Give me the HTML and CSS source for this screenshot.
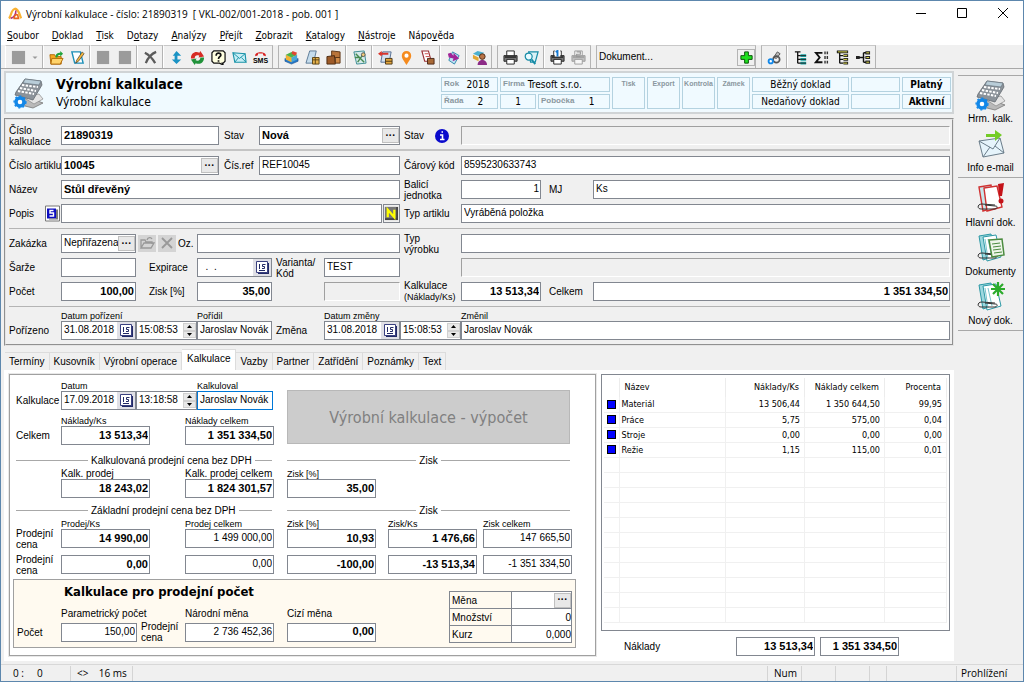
FILE: index.html
```html
<!DOCTYPE html>
<html lang="cs">
<head>
    <meta charset="UTF-8">
    <meta name="viewport" content="width=device-width, initial-scale=1.0">
    <title>Výrobní kalkulace</title>
    <link rel="stylesheet" href="styles.css">
</head>
<body>
    <!-- Shared icons -->
    <svg class="defs" width="0" height="0" aria-hidden="true">
        <symbol id="calc" viewBox="0 0 32 32">
            <path d="M8 21l14 2 8 3-10 5-8-2z" fill="#b9b9b9" stroke="#777" stroke-width=".8"/>
            <path d="M10 20l16-3 4 5-9 5z" fill="#e4e4e4" stroke="#888" stroke-width=".7"/>
            <path d="M12 2l16 2 1 4-9 15-18-5 1-3z" fill="#8b9299" stroke="#666c72" stroke-width=".8"/>
            <path d="M12 2l16 2-2 4-16-2z" fill="#b9cdd8" stroke="#5f6c76" stroke-width=".6"/>
            <path d="M9 8l16 2M7 11l16 3M5 14l16 3" stroke="#fff" stroke-width="2" stroke-dasharray="2.4 1.3"/>
            <circle cx="7" cy="25" r="4" fill="#fff" stroke="#1287e8" stroke-width="3.4"/>
            <circle cx="7" cy="25" r="5.9" fill="none" stroke="#1287e8" stroke-width="1.4" stroke-dasharray="2 2.4"/>
        </symbol>
        <symbol id="clip" viewBox="0 0 32 32">
            <path d="M4 4l12-2 4 22-12 4z" fill="#9fd8df" stroke="#2b98a5"/>
            <path d="M8 5l13-2 5 22-14 4z" fill="#fff" stroke="#2b98a5"/>
            <path d="M13 7l4 18M10 7l3 20" stroke="#58b5c0" stroke-width=".8" fill="none"/>
            <path d="M20 22l-13-1c-5 0-5 5-1 5l14 0c3-1 3-3 0-3l-10-1" fill="none" stroke="#333" stroke-width="1"/>
        </symbol>
        <symbol id="cal" viewBox="0 0 13 13">
            <path d="M2 2h11v11H2z" fill="#222a66"/>
            <path d="M.5 .5h11v11H.5z" fill="#fff" stroke="#3a4080"/>
            <path d="M3.500 3v5M9.500 3.500H6.500V5.500H8.500V7.500H6M3 9.500h6" fill="none" stroke="#222a66"/>
        </symbol>
        <symbol id="up" viewBox="0 0 7 4"><path d="M0 4L3.500 0 7 4z"/></symbol>
        <symbol id="down" viewBox="0 0 7 4"><path d="M0 0L3.500 4 7 0z"/></symbol>
        <symbol id="tree" viewBox="0 0 16 16">
            <path d="M2 2h6M5 2v12M5 6h4M5 10h4M5 14h4" stroke="#111" fill="none" stroke-width="1.400"/>
        </symbol>
        <symbol id="printer" viewBox="0 0 16 16">
            <path d="M4 1h8v6H4z" fill="#fff" stroke="#222"/>
            <path d="M1 6h14v6H1z" fill="#777" stroke="#222"/>
            <path d="M4 10h8v5H4z" fill="#fff" stroke="#222"/>
            <path d="M2 7.500h12" stroke="#333" stroke-width="2"/>
        </symbol>
    </svg>

    <div class="window">
        <header class="titlebar">
            <svg class="app-icon" viewBox="0 0 16 16">
                <path d="M1 13C4 11 3 3 8 2c4 0 5 6 7 11" fill="none" stroke="#f9b233" stroke-width="2.600"/>
                <path d="M3 13c4-1 6-4 6-9" fill="none" stroke="#b2307a" stroke-width="1.800"/>
                <path d="M7 13c0-3 2-5 4-4l1 4z" fill="none" stroke="#e8661b" stroke-width="1.800"/>
            </svg>
            <span class="window-title">Výrobní kalkulace - číslo: 21890319&nbsp; [ VKL-002/001-2018 - pob. 001 ]</span>
            <div class="window-controls">
                <button type="button" aria-label="Minimalizovat"><svg viewBox="0 0 10 10"><path d="M0 5.500h10"/></svg></button>
                <button type="button" aria-label="Maximalizovat"><svg viewBox="0 0 10 10"><path d="M.5 .5h9v9h-9z"/></svg></button>
                <button type="button" aria-label="Zavřít"><svg viewBox="0 0 10 10"><path d="M0 0l10 10M10 0L0 10"/></svg></button>
            </div>
        </header>

        <nav class="menubar">
            <button type="button"><u>S</u>oubor</button>
            <button type="button"><u>D</u>oklad</button>
            <button type="button"><u>T</u>isk</button>
            <button type="button">D<u>o</u>tazy</button>
            <button type="button"><u>A</u>nalýzy</button>
            <button type="button"><u>P</u>řejít</button>
            <button type="button"><u>Z</u>obrazit</button>
            <button type="button"><u>K</u>atalogy</button>
            <button type="button"><u>N</u>ástroje</button>
            <button type="button">Nápo<u>v</u>ěda</button>
        </nav>

        <div class="toolbar">
            <div class="group">
                <button type="button" aria-label="Uložit" disabled><svg viewBox="0 0 16 16"><path d="M1 1h14v14H1z" fill="#9b9b9b"/></svg></button>
                <button type="button" class="narrow" aria-label="Další volby" disabled><svg viewBox="0 0 16 16"><path d="M3 6h10l-5 5z" fill="#999"/></svg></button>
            </div>
            <div class="group">
                <button type="button" aria-label="Otevřít"><svg viewBox="0 0 16 16"><path d="M1 5h5l1 2h6v8H2z" fill="#f7a823" stroke="#b06b0a"/><path d="M3 9h12l-3 6H2z" fill="#ffd36a" stroke="#b06b0a"/><path d="M7 8c0-4 2-5 5-5V1l3 3-3 3V5c-2 0-3 1-3 3z" fill="#20a33a"/></svg></button>
                <button type="button" aria-label="Upravit"><svg viewBox="0 0 16 16"><path d="M2 2h9l3 12H5z" fill="#fff" stroke="#1c8fb8" stroke-width="1.500"/><path d="M13 2l-6 9-1 3 3-2 6-8z" fill="#f4b63b" stroke="#333" stroke-width=".7"/></svg></button>
            </div>
            <div class="group">
                <button type="button" aria-label="Předchozí" disabled><svg viewBox="0 0 16 16"><path d="M1 1h13v14H1z" fill="#9b9b9b"/></svg></button>
                <button type="button" aria-label="Následující" disabled><svg viewBox="0 0 16 16"><path d="M2 1h13v14H2z" fill="#9b9b9b"/></svg></button>
            </div>
            <div class="group">
                <button type="button" aria-label="Smazat"><svg viewBox="0 0 16 16"><path d="M2 3c4 2 8 6 11 11M14 2C9 4 5 9 3 14" stroke="#5b5b5b" stroke-width="2.400" fill="none"/></svg></button>
            </div>
            <div class="group">
                <button type="button" aria-label="Přesun"><svg viewBox="0 0 16 16"><path d="M8 1l5 5H9v4h4l-5 5-5-5h3V6H4z" fill="#1b93c4"/></svg></button>
                <button type="button" aria-label="Obnovit"><svg viewBox="0 0 16 16"><path d="M1 9c0-6 5-8 9-6l1-2 4 6-6 1 1-2C7 5 5 6 5 9z" fill="#d62c24"/><path d="M15 8c0 6-5 8-9 6l-1 2-4-6 6-1-1 2c3 1 5 0 5-3z" fill="#21923a"/></svg></button>
                <button type="button" aria-label="Nápověda"><svg viewBox="0 0 16 16"><path d="M3 1h10l2 2v9l-2 2h-1l1 2-4-2H3l-2-2V3z" fill="#ffffe0" stroke="#111" stroke-width="1.300"/><path d="M5.500 6c0-4 5-3 5-.5C10.500 7 8 7 8 9.500M8 11v1.500" fill="none" stroke="#111" stroke-width="1.800"/></svg></button>
                <button type="button" aria-label="E-mail"><svg viewBox="0 0 16 16"><path d="M1 3l13 1 1 9-12 0z" fill="#c7eef5" stroke="#1992a8" stroke-width="1.200"/><path d="M1 3l7 6 6-5M3 13l4-5M15 13l-5-5" fill="none" stroke="#1992a8"/></svg></button>
                <button type="button" aria-label="SMS" class="sms"><svg viewBox="0 0 16 7"><path d="M2 6C0 0 16 0 14 6l-3-1V3H5v2z" fill="#d81e1e"/></svg><span>SMS</span></button>
            </div>
            <div class="group double">
                <button type="button" aria-label="Sklady"><svg viewBox="0 0 16 16"><path d="M1 9l7 3 7-3v3l-7 3-7-3z" fill="#2477c9" stroke="#174d85" stroke-width=".6"/><path d="M2 5l6 3 6-3v5l-6 3-6-3z" fill="#4aa7d6"/><path d="M2 5l6 3v5l-6-3z" fill="#f3b332"/><path d="M2 5l6-3 6 3-6 3z" fill="#4db34a"/><path d="M9 1l5 2-2 3-4-2z" fill="#df4632"/></svg></button>
                <button type="button" aria-label="Ceník"><svg viewBox="0 0 16 16"><path d="M5 1h7L9 14H1z" fill="#c5dcec" stroke="#5a7894"/><path d="M8 8h7v7H8z" fill="#e3b04b" stroke="#5b4315"/><path d="M8 10.500h7M11 8v7" stroke="#5b4315"/></svg></button>
                <button type="button" aria-label="Balení"><svg viewBox="0 0 16 16"><path d="M6 1l9 1v6H6z" fill="#b9743a" stroke="#5b3415"/><path d="M1 7l8-1 1 9-9 0z" fill="#9d5a28" stroke="#4b2a10"/><path d="M10 8h5v6h-5z" fill="#d08a47" stroke="#5b3415"/></svg></button>
            </div>
            <div class="group">
                <button type="button" aria-label="Výpočet"><svg viewBox="0 0 16 16"><path d="M2 2l11-1 2 13-10 1z" fill="#d5e9ea" stroke="#3c8c93"/><path d="M4 4l9 9M13 3l-7 10M3 8h5" stroke="#468a50" stroke-width="1.500"/><circle cx="12" cy="5" r="2" fill="#f2cc78" stroke="#555"/></svg></button>
            </div>
            <div class="group">
                <button type="button" aria-label="Výdej"><svg viewBox="0 0 16 16"><path d="M5 2h9l-2 11H3z" fill="#d3e1f0" stroke="#526d91"/><path d="M0 4l4-3v2h7v2H4v2z" fill="#d9342b"/><path d="M8 9h7v6H8z" fill="#e3a63d" stroke="#4c3818"/><path d="M8 12h7" stroke="#4c3818"/></svg></button>
                <button type="button" aria-label="Mapa"><svg viewBox="0 0 16 16"><path d="M8 16C5 11 3 9 3 6a5 5 0 0 1 10 0c0 3-2 5-5 10z" fill="#f58b1f"/><circle cx="8" cy="6" r="2.200" fill="#fff"/></svg></button>
                <button type="button" aria-label="Příjem"><svg viewBox="0 0 16 16"><path d="M2 1h7l3 11H5z" fill="#fff" stroke="#9a2f35" stroke-width="1.200"/><path d="M5 4h4M6 7h4" stroke="#c44"/><path d="M8 9h7v6H8z" fill="#a86937" stroke="#4c2818"/></svg></button>
            </div>
            <div class="group">
                <button type="button" aria-label="Převod"><svg viewBox="0 0 16 16"><path d="M7 2l7 4-5 9-6-4z" fill="#bfe4f4" stroke="#2f86ad"/><path d="M2 4l3-1 3 3V3l6 6-7 3 1-3-5-1z" fill="#a02498"/></svg></button>
            </div>
            <div class="group">
                <button type="button" aria-label="Uživatel"><svg viewBox="0 0 16 16"><path d="M1 4l5-3 7 2-5 4z" fill="#4bb0cf"/><path d="M1 5l6 3v4l-6-3z" fill="#e2a733"/><circle cx="11" cy="7" r="3" fill="#b87346" stroke="#4d2c16"/><path d="M6 16c0-7 10-7 10 0z" fill="#8c2b86"/></svg></button>
            </div>
            <div class="group double">
                <button type="button" aria-label="Tisk"><svg><use href="#printer"/></svg></button>
                <button type="button" aria-label="Náhled"><svg viewBox="0 0 16 16"><path d="M5 2h10l-3 11H7z" fill="#d9f1f6" stroke="#168ba6" stroke-width="1.300"/><circle cx="5" cy="7" r="3.700" fill="#e8faff" stroke="#168ba6" stroke-width="1.300"/><path d="M8 10l4 5" stroke="#168ba6" stroke-width="2"/></svg></button>
            </div>
            <div class="group">
                <button type="button" aria-label="Tisk 1"><svg viewBox="0 0 16 16"><use href="#printer"/><path d="M5 0h6v7H5z" fill="#fff"/><path d="M6 2l2-1v6" fill="none" stroke="#1478d2" stroke-width="2"/></svg></button>
                <button type="button" aria-label="Tisk 2" disabled><svg viewBox="0 0 16 16"><g opacity=".4"><use href="#printer"/></g><path d="M6 2h4v2.500H6V7h4" fill="none" stroke="#999" stroke-width="1.200"/></svg></button>
            </div>
            <div class="group double document">
                <input type="text" value="Dokument..." aria-label="Dokument">
                <button type="button" aria-label="Přidat dokument"><svg viewBox="0 0 16 16"><path d="M6 2h4v4h4v4h-4v4H6v-4H2V6h4z" fill="#1fe01f" stroke="#064d06"/></svg></button>
            </div>
            <div class="group double">
                <button type="button" aria-label="Nastavení"><svg viewBox="0 0 16 16"><path d="M7 8l4-6 3 2-4 5z" fill="#bbb" stroke="#555"/><circle cx="10" cy="10" r="3.500" fill="none" stroke="#555" stroke-width="1.800"/><circle cx="4" cy="12" r="2.300" fill="#fff" stroke="#1287e8" stroke-width="2"/></svg></button>
            </div>
            <div class="group last">
                <button type="button" aria-label="Strom"><svg viewBox="0 0 16 16"><use href="#tree"/><path d="M8 6h6M8 10h6M8 14h6" stroke="#1aa6a6" stroke-width="3"/><path d="M8 6h6M8 10h6M8 14h6" stroke="#222" stroke-width="1"/></svg></button>
                <button type="button" aria-label="Součty"><svg viewBox="0 0 16 16"><path d="M9 3H2l4 5-4 5h7" fill="none" stroke="#111" stroke-width="2"/><path d="M11 3h4M11 8h4M11 13h4" stroke="#333" stroke-width="3" stroke-dasharray="1.500 1"/></svg></button>
                <button type="button" aria-label="Struktura"><svg viewBox="0 0 16 16"><path d="M2 2h12" stroke="#222" stroke-width="3"/><use href="#tree"/><path d="M9 6h5M9 10h5M9 14h5" stroke="#222" stroke-width="3"/><path d="M3 2h10M9 6h4M9 10h4M9 14h4" stroke="#e4e04a"/></svg></button>
                <button type="button" aria-label="Větvení"><svg viewBox="0 0 16 16"><path d="M1 8h8M8 3v10M8 3h3M8 13h3" stroke="#111" stroke-width="1.500" fill="none"/><path d="M0 8h4M10 3h5M10 8h5M10 13h5" stroke="#222" stroke-width="3.400"/><path d="M11 3h3M11 8h3M11 13h3" stroke="#e4e04a"/></svg></button>
            </div>
        </div>

        <div class="workspace">
            <main class="main">
                <section class="doc-header">
                    <svg class="doc-icon"><use href="#calc"/></svg>
                    <div class="doc-title">
                        <h1>Výrobní kalkulace</h1>
                        <p>Výrobní kalkulace</p>
                    </div>
                    <div class="doc-info">
                        <div class="cell"><small>Rok</small><span>2018</span></div>
                        <div class="cell company"><small>Firma</small><span>Tresoft s.r.o.</span></div>
                        <div class="cell tall"><small>Tisk</small></div>
                        <div class="cell tall"><small>Export</small></div>
                        <div class="cell tall"><small>Kontrola</small></div>
                        <div class="cell tall"><small>Zámek</small></div>
                        <div class="cell"><span>Běžný doklad</span></div>
                        <div class="cell"></div>
                        <div class="cell strong"><span>Platný</span></div>
                        <div class="cell"><small>Řada</small><span>2</span></div>
                        <div class="cell"><span>1</span></div>
                        <div class="cell"><small>Pobočka</small><span>1</span></div>
                        <div class="cell"><span>Nedaňový doklad</span></div>
                        <div class="cell"></div>
                        <div class="cell strong"><span>Aktivní</span></div>
                    </div>
                </section>

                <form class="form">
                    <div class="row">
                        <label for="number">Číslo<br>kalkulace</label>
                        <div class="pair">
                            <input id="number" class="bold first" value="21890319">
                            <label for="state">Stav</label>
                            <div class="field">
                                <input id="state" class="bold" value="Nová">
                                <button type="button" class="more" aria-label="Vybrat stav">···</button>
                            </div>
                        </div>
                        <label class="l2" for="state2">Stav <svg class="info" viewBox="0 0 14 14"><circle cx="7" cy="7" r="7" fill="#0a0acc"/><path d="M5 6h2.500v4.500M5 10.500h4.500M6.500 3h1.500" fill="none" stroke="#fff" stroke-width="1.600"/></svg></label>
                        <input id="state2" class="to-end" readonly>
                    </div>
                    <hr class="double-line">
                    <div class="row">
                        <label for="article">Číslo artiklu</label>
                        <div class="pair">
                            <div class="field first">
                                <input id="article" class="bold" value="10045">
                                <button type="button" class="more" aria-label="Vybrat artikl">···</button>
                            </div>
                            <label for="ref">Čís.ref</label>
                            <input id="ref" value="REF10045">
                        </div>
                        <label class="l2" for="ean">Čárový kód</label>
                        <input id="ean" class="to-end" value="8595230633743">
                    </div>
                    <div class="row">
                        <label for="name">Název</label>
                        <input id="name" class="bold to-mid" value="Stůl dřevěný">
                        <label class="l2" for="pack">Balicí<br>jednotka</label>
                        <input id="pack" class="num" value="1">
                        <label class="l3" for="unit">MJ</label>
                        <input id="unit" value="Ks">
                    </div>
                    <div class="row">
                        <label class="popis" for="desc">Popis <svg viewBox="0 0 15 16"><path d="M.5 .5h14v15H.5z" fill="#fff" stroke="#777"/><path d="M2 3h9v10H2z" fill="#0c0cc0"/><path d="M11 4h2v10H4v-1h7z" fill="#777"/><path d="M8.500 5H5v2.500h3.500V10.500H4.500" fill="none" stroke="#fff" stroke-width="1.400"/></svg></label>
                        <div class="pair">
                            <input id="desc">
                            <button type="button" class="note" aria-label="Poznámka"><svg viewBox="0 0 16 16"><path d="M1 1h14v14H1z" fill="#444"/><path d="M1 1h12v12H1z" fill="#777"/><path d="M4 12V4l7 8V4" fill="none" stroke="#ff0" stroke-width="2.400"/></svg></button>
                        </div>
                        <label class="l2" for="type">Typ artiklu</label>
                        <input id="type" class="to-end" value="Vyráběná položka">
                    </div>
                    <hr>
                    <div class="row">
                        <label for="order">Zakázka</label>
                        <div class="field">
                            <input id="order" value="Nepřiřazena">
                            <button type="button" class="more" aria-label="Vybrat zakázku">···</button>
                        </div>
                        <div class="tools">
                            <button type="button" aria-label="Otevřít zakázku" disabled><svg viewBox="0 0 16 16"><path d="M2 13V5h4l1 2h6v2M2 13l3-5h10l-3 5zM8 5c1-3 4-3 5-1" fill="none" stroke="#999" stroke-width="1.300"/></svg></button>
                            <button type="button" aria-label="Zrušit zakázku" disabled><svg viewBox="0 0 16 16"><path d="M3 3l10 10M13 3L3 13" stroke="#999" stroke-width="1.800"/></svg></button>
                            <label for="oz">Oz.</label>
                        </div>
                        <input id="oz" class="oz">
                        <label class="l2" for="ptype">Typ<br>výrobku</label>
                        <input id="ptype" class="to-end">
                    </div>
                    <div class="row">
                        <label for="batch">Šarže</label>
                        <input id="batch">
                        <label class="l4" for="exp">Expirace</label>
                        <div class="field">
                            <input id="exp" value="  .  .">
                            <button type="button" class="cal" aria-label="Kalendář"><svg><use href="#cal"/></svg></button>
                        </div>
                        <label class="l2" for="variant">Varianta/<br>Kód</label>
                        <input id="variant" value="TEST">
                        <input class="to-end" aria-label="Popis typu" readonly>
                    </div>
                    <div class="row">
                        <label for="count">Počet</label>
                        <input id="count" class="num bold" value="100,00">
                        <label class="l4" for="profit">Zisk [%]</label>
                        <input id="profit" class="num bold" value="35,00">
                        <span></span>
                        <input aria-label="Kód" readonly>
                        <label class="l2" for="calc-ks">Kalkulace<br><small>(Náklady/Ks)</small></label>
                        <input id="calc-ks" class="num bold" value="13 513,34">
                        <label class="l3" for="total">Celkem</label>
                        <input id="total" class="num bold" value="1 351 334,50">
                    </div>
                    <hr>
                    <div class="row captions">
                        <span></span>
                        <label for="created">Datum pořízení</label>
                        <span></span>
                        <label for="creator">Pořídil</label>
                        <span></span>
                        <label for="changed">Datum změny</label>
                        <span></span>
                        <label for="changer">Změnil</label>
                    </div>
                    <div class="row">
                        <label for="created">Pořízeno</label>
                        <div class="field">
                            <input id="created" value="31.08.2018">
                            <button type="button" class="cal" aria-label="Kalendář"><svg><use href="#cal"/></svg></button>
                        </div>
                        <div class="field">
                            <input aria-label="Čas pořízení" value="15:08:53">
                            <span class="spin"><button type="button" aria-label="Více"><svg><use href="#up"/></svg></button><button type="button" aria-label="Méně"><svg><use href="#down"/></svg></button></span>
                        </div>
                        <input id="creator" value="Jaroslav Novák">
                        <label class="l2" for="changed">Změna</label>
                        <div class="field">
                            <input id="changed" value="31.08.2018">
                            <button type="button" class="cal" aria-label="Kalendář"><svg><use href="#cal"/></svg></button>
                        </div>
                        <div class="field">
                            <input aria-label="Čas změny" value="15:08:53">
                            <span class="spin"><button type="button" aria-label="Více"><svg><use href="#up"/></svg></button><button type="button" aria-label="Méně"><svg><use href="#down"/></svg></button></span>
                        </div>
                        <input id="changer" class="to-end" value="Jaroslav Novák">
                    </div>
                </form>

                <div class="tabs" role="tablist">
                    <button type="button" role="tab">Termíny</button>
                    <button type="button" role="tab">Kusovník</button>
                    <button type="button" role="tab">Výrobní operace</button>
                    <button type="button" role="tab" class="active" aria-selected="true">Kalkulace</button>
                    <button type="button" role="tab">Vazby</button>
                    <button type="button" role="tab">Partner</button>
                    <button type="button" role="tab">Zatřídění</button>
                    <button type="button" role="tab">Poznámky</button>
                    <button type="button" role="tab">Text</button>
                </div>

                <div class="tab-page">
                    <form class="calc-panel">
                        <div class="calc-top">
                            <div class="calc-top-left">
                                <div class="date-grid captions">
                                    <span></span>
                                    <label for="cdate">Datum</label>
                                    <span></span>
                                    <label for="cuser">Kalkuloval</label>
                                </div>
                                <div class="date-grid">
                                    <label for="cdate">Kalkulace</label>
                                    <div class="field">
                                        <input id="cdate" value="17.09.2018">
                                        <button type="button" class="cal" aria-label="Kalendář"><svg><use href="#cal"/></svg></button>
                                    </div>
                                    <div class="field">
                                        <input aria-label="Čas kalkulace" value="13:18:58">
                                        <span class="spin"><button type="button" aria-label="Více"><svg><use href="#up"/></svg></button><button type="button" aria-label="Méně"><svg><use href="#down"/></svg></button></span>
                                    </div>
                                    <input id="cuser" class="focused" value="Jaroslav Novák">
                                </div>
                                <div class="price-grid captions gap-top">
                                    <label class="c1" for="nks">Náklady/Ks</label>
                                    <label class="c2" for="nc">Náklady celkem</label>
                                </div>
                                <div class="price-grid">
                                    <span class="c0">Celkem</span>
                                    <input id="nks" class="c1 num bold" value="13 513,34">
                                    <input id="nc" class="c2 num bold" value="1 351 334,50">
                                </div>
                            </div>
                            <button type="button" class="compute" disabled>Výrobní kalkulace - výpočet</button>
                        </div>

                        <div class="rules">
                            <div class="rule long"><span>Kalkulovaná prodejní cena bez DPH</span></div>
                            <div class="rule"><span>Zisk</span></div>
                        </div>
                        <div class="price-grid captions">
                            <label class="c1 plain" for="kp">Kalk. prodej</label>
                            <label class="c2 plain" for="kpc">Kalk. prodej celkem</label>
                            <label class="c3" for="z1">Zisk [%]</label>
                        </div>
                        <div class="price-grid">
                            <input id="kp" class="c1 num bold" value="18 243,02">
                            <input id="kpc" class="c2 num bold" value="1 824 301,57">
                            <input id="z1" class="c3 num bold" value="35,00">
                        </div>

                        <div class="rules">
                            <div class="rule long"><span>Základní prodejní cena bez DPH</span></div>
                            <div class="rule"><span>Zisk</span></div>
                        </div>
                        <div class="price-grid captions">
                            <label class="c1" for="pks">Prodej/Ks</label>
                            <label class="c2" for="pc">Prodej celkem</label>
                            <label class="c3" for="z2">Zisk [%]</label>
                            <label class="c4" for="zks">Zisk/Ks</label>
                            <label class="c5" for="zc">Zisk celkem</label>
                        </div>
                        <div class="price-grid">
                            <span class="c0">Prodejní<br>cena</span>
                            <input id="pks" class="c1 num bold" value="14 990,00">
                            <input id="pc" class="c2 num" value="1 499 000,00">
                            <input id="z2" class="c3 num bold" value="10,93">
                            <input id="zks" class="c4 num bold" value="1 476,66">
                            <input id="zc" class="c5 num" value="147 665,50">
                        </div>
                        <div class="price-grid second">
                            <span class="c0">Prodejní<br>cena</span>
                            <input class="c1 num bold" value="0,00" aria-label="Prodej/Ks 2">
                            <input class="c2 num" value="0,00" aria-label="Prodej celkem 2">
                            <input class="c3 num bold" value="-100,00" aria-label="Zisk % 2">
                            <input class="c4 num bold" value="-13 513,34" aria-label="Zisk/Ks 2">
                            <input class="c5 num" value="-1 351 334,50" aria-label="Zisk celkem 2">
                        </div>

                        <div class="sale-box">
                            <div class="sale">
                                <h2>Kalkulace pro prodejní počet</h2>
                                <div class="sale-grid captions">
                                    <label class="c1 plain" for="par">Parametrický počet</label>
                                    <label class="c2 plain" for="nat">Národní měna</label>
                                    <label class="c3 plain" for="for">Cizí měna</label>
                                </div>
                                <div class="sale-grid">
                                    <label for="par">Počet</label>
                                    <input id="par" class="num" value="150,00">
                                    <label class="l2" for="nat">Prodejní<br>cena</label>
                                    <input id="nat" class="num" value="2 736 452,36">
                                    <input id="for" class="c3 num bold" value="0,00">
                                </div>
                            </div>
                            <table class="currency">
                                <tr><th scope="row">Měna</th><td><button type="button" class="more" aria-label="Vybrat měnu">···</button></td></tr>
                                <tr><th scope="row">Množství</th><td>0</td></tr>
                                <tr><th scope="row">Kurz</th><td>0,000</td></tr>
                            </table>
                        </div>
                    </form>

                    <section class="costs">
                        <div class="list">
                            <table>
                                <thead>
                                    <tr><th class="mark"></th><th class="name">Název</th><th>Náklady/Ks</th><th>Náklady celkem</th><th>Procenta</th></tr>
                                </thead>
                                <tbody>
                                    <tr><td><i></i></td><td>Materiál</td><td>13 506,44</td><td>1 350 644,50</td><td>99,95</td></tr>
                                    <tr><td><i></i></td><td>Práce</td><td>5,75</td><td>575,00</td><td>0,04</td></tr>
                                    <tr><td><i></i></td><td>Stroje</td><td>0,00</td><td>0,00</td><td>0,00</td></tr>
                                    <tr><td><i></i></td><td>Režie</td><td>1,15</td><td>115,00</td><td>0,01</td></tr>
                                    <tr><td></td><td></td><td></td><td></td><td></td></tr>
                                    <tr><td></td><td></td><td></td><td></td><td></td></tr>
                                    <tr><td></td><td></td><td></td><td></td><td></td></tr>
                                    <tr><td></td><td></td><td></td><td></td><td></td></tr>
                                    <tr><td></td><td></td><td></td><td></td><td></td></tr>
                                    <tr><td></td><td></td><td></td><td></td><td></td></tr>
                                    <tr><td></td><td></td><td></td><td></td><td></td></tr>
                                    <tr><td></td><td></td><td></td><td></td><td></td></tr>
                                    <tr><td></td><td></td><td></td><td></td><td></td></tr>
                                    <tr><td></td><td></td><td></td><td></td><td></td></tr>
                                    <tr><td></td><td></td><td></td><td></td><td></td></tr>
                                </tbody>
                            </table>
                        </div>
                        <div class="sums">
                            <label for="sum1">Náklady</label>
                            <input id="sum1" class="num bold" value="13 513,34">
                            <input class="num bold" value="1 351 334,50" aria-label="Náklady celkem">
                        </div>
                    </section>
                </div>
            </main>

            <aside class="sidebar">
                <div class="side-group">
                    <button type="button"><svg><use href="#calc"/></svg>Hrm. kalk.</button>
                    <button type="button"><svg viewBox="0 0 32 32"><path d="M4 13l21-3 4 15-21 4z" fill="#e6f4fb" stroke="#6b7d8a"/><path d="M4 13l14 8 7-11M8 29l7-10M29 25l-9-7" fill="none" stroke="#6b7d8a"/><path d="M11 6h9V2l7 5-7 6V9h-9z" fill="#74cc25"/></svg>Info e-mail</button>
                </div>
                <div class="side-group">
                    <button type="button"><svg viewBox="0 0 32 32"><path d="M4 4l12-2 4 22-12 4z" fill="#c9e6ea" stroke="#d03232" stroke-width="1.400"/><path d="M9 5l13-2 5 21-15 4z" fill="#fff" stroke="#d03232" stroke-width="1.400"/><path d="M20 22l-13-1c-5 0-5 5-1 5l14 0c3-1 3-3 0-3l-10-1" fill="none" stroke="#333"/><path d="M23 1l6-1-2 13h-3z" fill="#c41218"/><circle cx="26" cy="18" r="2.500" fill="#c41218"/></svg>Hlavní dok.</button>
                    <button type="button"><svg viewBox="0 0 32 32"><use href="#clip"/><path d="M14 8l13-1 2 16-12 2z" fill="#eef5e9" stroke="#4b8b3f" stroke-width="1.500"/><path d="M17 12l8-1M18 15l8-1M18 18l8-1M19 21l8-1" stroke="#4b8b3f"/></svg>Dokumenty</button>
                    <button type="button"><svg viewBox="0 0 32 32"><use href="#clip"/><path d="M23 1v14M16 8h14M18 3l10 10M28 3L18 13" stroke="#2cab2c" stroke-width="2.200"/></svg>Nový dok.</button>
                </div>
            </aside>
        </div>

        <footer class="statusbar">
            <span class="pos">0 :</span>
            <span class="line">0</span>
            <span class="time">&lt;&gt;&nbsp;&nbsp;&nbsp; 16 ms</span>
            <span class="fill"></span>
            <span class="key">Num</span>
            <span class="key"></span>
            <span class="key"></span>
            <span class="thin"></span>
            <span class="wide"></span>
            <span class="mode">Prohlížení</span>
        </footer>
    </div>
</body>
</html>
```
FILE: styles.css
```css
:root {
    --face: #f0f0f0;
    --border: #828790;
    --line: #a8a8a8;
    --light-line: #dcdcdc;
    --header-bg: #f0faff;
    --header-border: #b4d2e0;
    --window-border: #5d87ad;
    --ui-font: "DejaVu Sans Condensed", "DejaVu Sans", sans-serif;
    --form-font: "Liberation Sans", Arial, sans-serif;
}

* {
    box-sizing: border-box;
    margin: 0;
    padding: 0;
}

body {
    font-family: var(--form-font);
    font-size: 10px;
    line-height: 11px;
    color: #000;
    background: var(--face);
}

button {
    font: inherit;
    color: inherit;
    background: none;
    border: none;
}

.defs {
    position: absolute;
}

.window {
    display: flex;
    flex-direction: column;
    min-height: 100vh;
    border: 1px solid var(--window-border);
}

/* Title bar and menu */
.titlebar {
    display: flex;
    align-items: center;
    height: 26px;
    padding-left: 7px;
    background: #fff;
}

.app-icon {
    width: 14px;
    height: 14px;
    margin-right: 4px;
}

.window-title {
    flex: 1;
    font-family: "Open Sans", sans-serif;
    font-size: 10px;
}

.window-controls {
    display: flex;
}

.window-controls button {
    width: 41px;
    height: 24px;
}

.window-controls svg {
    width: 10px;
    height: 10px;
    fill: none;
    stroke: #000;
}

.menubar {
    display: flex;
    gap: 13px;
    height: 18px;
    padding: 0 0 2px 6px;
    background: #fff;
    font-family: var(--ui-font);
    font-size: 10px;
}

/* Toolbar */
.toolbar {
    display: flex;
    height: 24px;
    padding-left: 4px;
    border-bottom: 1px solid var(--line);
}

.group {
    display: flex;
    align-items: center;
    padding: 0 1px 0 2px;
    border-top: 1px solid #c8c8c8;
    border-left: 1px solid #fff;
    border-right: 1px solid #b4b4b4;
}

.group.double {
    margin-left: 5px;
    border-left: 1px solid #b4b4b4;
}

.group button {
    display: flex;
    align-items: center;
    justify-content: center;
    width: 21px;
    height: 20px;
}

.group svg {
    width: 15px;
    height: 15px;
}

.group button.narrow {
    width: 12px;
}

.group button.narrow svg {
    width: 8px;
}

.group button.sms {
    flex-direction: column;
    font-size: 7px;
    font-weight: bold;
    line-height: 7px;
}

.group .sms svg {
    height: 6px;
}

.group.document {
    padding: 0;
}

.document input {
    width: 140px;
    height: 18px;
    padding: 0 2px 2px;
    border: none;
    background: none;
}

.group.document button {
    width: 18px;
    height: 17px;
    border: 1px solid #b4b4b4;
}

/* Workspace */
.workspace {
    display: flex;
    flex: 1;
}

.main {
    display: flex;
    flex: 1;
    flex-direction: column;
    min-width: 0;
    padding: 2px 0 0 3px;
}

.doc-header {
    display: flex;
    align-items: center;
    height: 43px;
    padding: 0 1px 0 7px;
    background: var(--header-bg);
    border: 2px solid #d0d4d6;
}

.doc-icon {
    width: 32px;
    height: 32px;
}

.doc-title {
    flex: 1;
    padding-left: 11px;
    font-family: var(--ui-font);
    font-size: 12px;
    line-height: 18px;
}

.doc-title h1 {
    font-size: 14px;
}

.doc-info {
    display: grid;
    grid-template-columns: 57px 36px 72px repeat(4, 33px) 97px 49px 49px;
    grid-template-rows: 15px 15px;
    gap: 2px;
    font-family: var(--ui-font);
    font-size: 10px;
}

.cell {
    display: flex;
    align-items: center;
    justify-content: center;
    border: 1px solid var(--header-border);
    white-space: nowrap;
}

.cell small {
    align-self: flex-start;
    padding-left: 2px;
    font-family: var(--form-font);
    font-size: 8px;
    font-weight: bold;
    color: #8a979e;
}

.cell small + span {
    flex: 1;
    text-align: center;
}

.cell.tall {
    grid-row: span 2;
    overflow: hidden;
}

.cell.tall small {
    padding: 0;
    font-size: 7px;
}

.cell.company {
    grid-column: span 2;
}

.cell.company span {
    padding-left: 3px;
    text-align: left;
}

.cell.strong {
    font-weight: bold;
}

/* Form */
.form {
    display: flex;
    flex-direction: column;
    gap: 5px;
    margin-top: 4px;
    padding: 6px 2px 4px 3px;
    border: 2px groove #e4e4e4;
}

.row {
    display: grid;
    grid-template-columns: 52px 75px 61px 75px 52px 76px 61px 80px 52px 1fr;
    grid-template-rows: 19px;
    align-items: center;
    height: 19px;
}

label {
    white-space: nowrap;
}

input {
    width: 100%;
    min-width: 0;
    height: 19px;
    padding: 0 2px 2px;
    border: 1px solid var(--border);
    background: #fff;
    font: inherit;
    color: inherit;
}

input[readonly] {
    background: var(--face);
    border-color: #a0a0a0 #fff #fff #a0a0a0;
}

.bold {
    font-size: 11px;
    font-weight: bold;
}

.num {
    padding-right: 1px;
    text-align: right;
}

.field {
    display: flex;
    align-items: center;
    height: 19px;
    border: 1px solid var(--border);
    background: #fff;
}

.field input {
    flex: 1;
    height: 17px;
    padding-right: 0;
    border: none;
}

.more {
    flex-shrink: 0;
    width: 17px;
    height: 15px;
    border: 1px solid #c0c0c0;
    background: #e8e8e8;
    font-weight: bold;
    line-height: 12px;
}

.cal {
    flex-shrink: 0;
    width: 18px;
    height: 17px;
    padding-top: 2px;
    background: #e0e0e6;
}

.cal svg {
    width: 13px;
    height: 13px;
}

.spin {
    display: flex;
    flex-direction: column;
    width: 13px;
    height: 15px;
    background: #e8e8e8;
}

.spin button {
    display: flex;
    flex: 1;
    align-items: center;
    justify-content: center;
    border: 1px solid #d0d0d0;
}

.spin svg {
    width: 5px;
    height: 3px;
}

.pair {
    display: flex;
    grid-column: 2 / 7;
    align-items: center;
}

.pair .field {
    flex: 1;
}

.pair .first {
    flex: none;
    width: 158px;
}

.pair .first + label {
    flex: none;
    width: 40px;
    padding-left: 5px;
}

.to-mid {
    grid-column: 2 / 7;
}

.to-end {
    grid-column: 8 / -1;
}

.oz {
    grid-column: 4 / 7;
}

.l2 {
    padding-left: 4px;
}

.l3 {
    padding-left: 8px;
}

.l4 {
    padding-left: 13px;
}

.row label small {
    font-size: 9px;
}

.info {
    width: 14px;
    height: 14px;
    margin-left: 8px;
    vertical-align: middle;
}

.popis {
    display: flex;
    align-items: center;
    justify-content: space-between;
    padding-right: 1px;
}

.popis svg {
    width: 15px;
    height: 17px;
}

.note {
    display: flex;
    align-items: center;
    justify-content: center;
    flex: none;
    width: 17px;
    height: 19px;
    margin-left: 1px;
    border: 1px solid var(--border);
}

.note svg {
    width: 15px;
    height: 15px;
}

.tools {
    display: flex;
    align-items: center;
    gap: 2px;
    padding-left: 2px;
}

.tools button {
    width: 18px;
    height: 17px;
    background: #d4d4d4;
}

.tools svg {
    width: 16px;
    height: 16px;
}

.form hr {
    height: 1px;
    border: none;
    background: #b4b4b4;
}

.form .double-line {
    height: 2px;
    margin-top: -1px;
    background: #c4c4c4;
}

.captions {
    height: 10px;
    font-size: 9px;
    line-height: 10px;
}

.form .captions {
    grid-template-rows: 10px;
    margin: -1px 0 -5px;
}

.captions .plain {
    font-size: 10px;
}

/* Tabs */
.tabs {
    display: flex;
    align-items: flex-end;
    height: 24px;
    padding: 0 1px;
}

.tabs button {
    height: 18px;
    padding: 0 4px;
    border: 1px solid var(--light-line);
    border-left: none;
    border-bottom: none;
}

.tabs .active {
    height: 21px;
    padding: 0 5px 3px;
    background: #fff;
}

.tab-page {
    display: flex;
    flex: 1;
    gap: 5px;
    padding: 4px 4px 5px 5px;
    background: #fff;
}

/* Calculation */
.calc-panel {
    flex: 1;
    min-width: 587px;
    padding: 6px 4px 7px 3px;
    border: 1px solid #a0a0a0;
    outline: 1px solid #e8e8e8;
}

.calc-top {
    display: flex;
    gap: 14px;
    padding-bottom: 3px;
}

.calc-top-left {
    width: 260px;
}

.date-grid {
    display: grid;
    grid-template-columns: 45px 75px 61px 76px;
    align-items: center;
    padding-left: 3px;
}

.focused {
    border-color: #0078d7;
}

.price-grid {
    display: grid;
    grid-template-columns: 45px 89px 35px 89px 13px 89px 12px 89px 6px 89px;
    align-items: center;
    padding-left: 3px;
}

.calc-top .price-grid {
    grid-template-columns: 45px 89px 35px 89px;
}

.price-grid .c0 {
    grid-column: 1;
    margin: -4px 0;
}

.gap-top {
    margin-top: 6px;
}

.c1 { grid-column: 2; }
.c2 { grid-column: 4; }
.c3 { grid-column: 6; }
.c4 { grid-column: 8; }
.c5 { grid-column: 10; }

.compute {
    width: 283px;
    height: 54px;
    margin-top: 9px;
    border: 1px solid #b8b8b8;
    background: #ccc;
    color: #808080;
    font-family: var(--ui-font);
    font-size: 16px;
}

.rules {
    display: grid;
    grid-template-columns: 256px 283px;
    gap: 15px;
    padding: 6px 0 3px 3px;
}

.rule {
    display: flex;
    align-items: center;
    gap: 3px;
    height: 12px;
    white-space: nowrap;
}

.rule::before,
.rule::after {
    content: "";
    flex: 1;
    height: 1px;
    background: #a8a8a8;
}

.rule.long::before {
    flex: none;
    width: 72px;
}

.second {
    margin-top: 7px;
}

.sale-box {
    display: flex;
    justify-content: space-between;
    align-items: flex-end;
    width: 563px;
    height: 69px;
    margin-top: 5px;
    padding: 4px 3px 4px 3px;
    border: 1px solid #a0a0a0;
    background: #fffaf0;
}

.sale h2 {
    padding: 0 0 11px 47px;
    font-family: var(--ui-font);
    font-size: 13px;
    line-height: 13px;
}

.sale-grid {
    display: grid;
    grid-template-columns: 44px 76px 48px 89px 13px 89px;
    align-items: center;
}

.sale-grid.captions {
    margin-bottom: 2px;
}

.currency {
    width: 123px;
    border-collapse: collapse;
}

.currency th,
.currency td {
    height: 17px;
    padding: 0 2px;
    border: 1px solid var(--border);
    font-weight: normal;
    text-align: left;
}

.currency td {
    width: 60px;
    padding: 0;
    background: #fff;
    text-align: right;
}

.currency .more {
    display: block;
    margin-left: auto;
}

/* Cost list */
.costs {
    width: 350px;
}

.list {
    height: 257px;
    padding: 3px 2px;
    border: 1px solid var(--border);
    font-family: var(--ui-font);
    font-size: 9px;
}

.list table {
    width: 100%;
    table-layout: fixed;
    border-collapse: collapse;
}

.list th {
    height: 19px;
    padding: 0 5px;
    border-right: 1px solid #ececec;
    font-weight: normal;
    text-align: right;
    white-space: nowrap;
}

.list th:nth-child(1) { width: 15px; }
.list th:nth-child(3) { width: 79px; }
.list th:nth-child(4) { width: 80px; }
.list th:nth-child(5) { width: 62px; }

.list th.name {
    text-align: left;
}

.list td {
    height: 15px;
    padding: 0 4px;
    border-right: 1px solid #f0f0f0;
    border-bottom: 1px solid #f0f0f0;
    line-height: 12px;
    text-align: right;
}

.list td:nth-child(1) {
    padding: 0 0 0 3px;
}

.list td:nth-child(2) {
    padding-left: 2px;
    text-align: left;
}

.list i {
    display: block;
    width: 9px;
    height: 9px;
    border: 1px solid #000;
    background: #00f;
}

.sums {
    display: flex;
    align-items: center;
    gap: 5px;
    padding: 6px 0 0 23px;
}

.sums label {
    width: 107px;
}

.sums input {
    width: 79px;
}

/* Right side buttons */
.sidebar {
    width: 65px;
    margin-left: 4px;
    padding-top: 6px;
}

.side-group {
    border-top: 1px solid var(--line);
    padding-top: 3px;
}

.side-group:last-child {
    padding-top: 5px;
    border-bottom: 1px solid var(--line);
}

.side-group button {
    display: flex;
    flex-direction: column;
    align-items: center;
    gap: 2px;
    width: 100%;
    height: 49px;
    white-space: nowrap;
}

.side-group svg {
    width: 32px;
    height: 32px;
}

/* Status bar */
.statusbar {
    display: flex;
    align-items: center;
    height: 17px;
    margin-top: 3px;
    border-top: 1px solid #d8d8d8;
    font-family: "Open Sans", sans-serif;
    font-size: 10px;
}

.statusbar span {
    height: 15px;
    padding-left: 6px;
    border-right: 1px solid #d4d4d4;
    line-height: 15px;
}

.statusbar .pos {
    width: 30px;
    padding-left: 12px;
    border: none;
}

.statusbar .line { width: 40px; }
.statusbar .time { width: 62px; }
.statusbar .fill { flex: 1; }
.statusbar .key { width: 34px; }
.statusbar .thin { width: 17px; }
.statusbar .wide { width: 70px; }

.statusbar .mode {
    width: 66px;
    padding-left: 4px;
    border: none;
}
```
